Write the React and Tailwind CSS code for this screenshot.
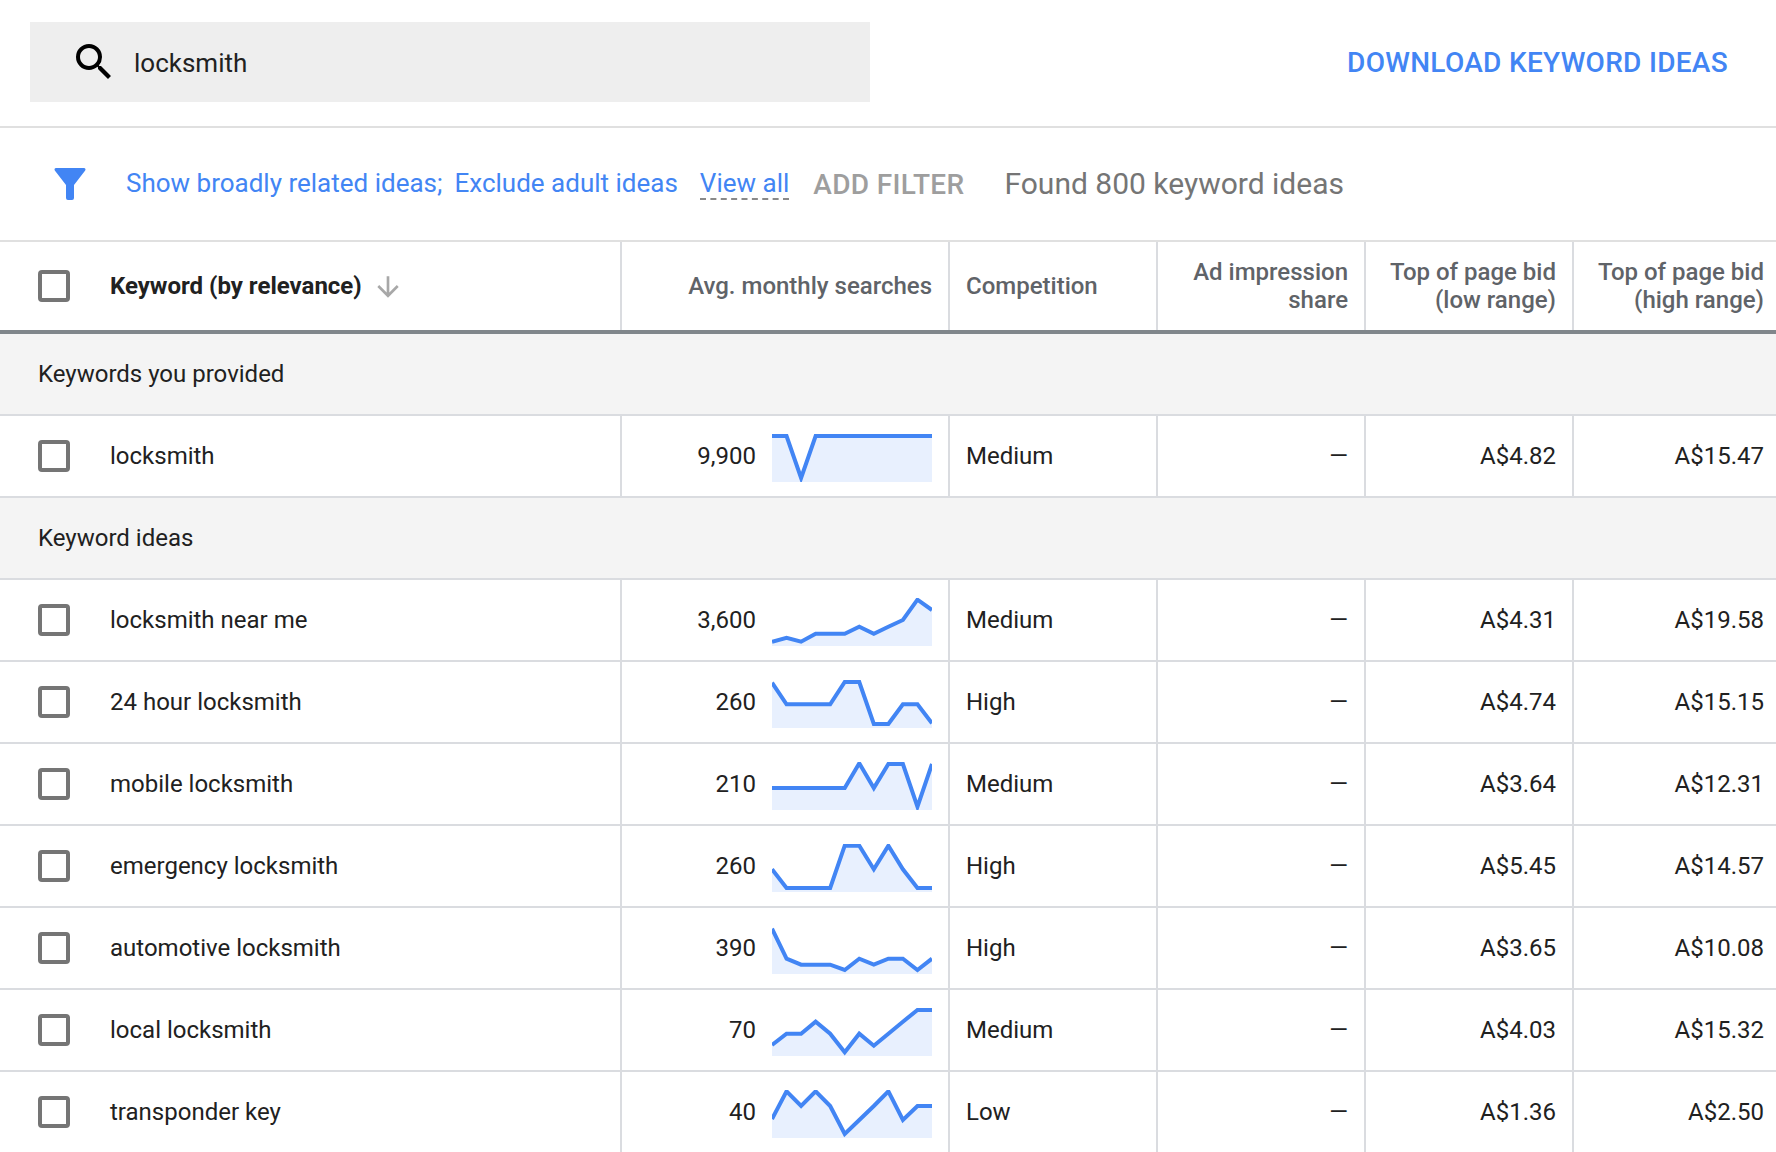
const font = "font-['Roboto',sans-serif]";

const ideas = [
  { kw: "locksmith near me", n: "3,600", comp: "Medium", low: "A$4.31", high: "A$19.58", ys: [43.7, 39.7, 43.7, 35.7, 35.7, 35.7, 28.7, 35.7, 28.7, 22, 1.7, 12] },
  { kw: "24 hour locksmith", n: "260", comp: "High", low: "A$4.74", high: "A$15.15", ys: [2.7, 24.3, 24.3, 24.3, 24.3, 2, 2, 44, 44, 24.3, 24.3, 43.3] },
  { kw: "mobile locksmith", n: "210", comp: "Medium", low: "A$3.64", high: "A$12.31", ys: [26, 26, 26, 26, 26, 26, 1.3, 26, 2, 2, 44.7, 2] },
  { kw: "emergency locksmith", n: "260", comp: "High", low: "A$5.45", high: "A$14.57", ys: [25.3, 44, 44, 44, 44, 1.7, 1.7, 25.3, 1.7, 25.3, 44, 44] },
  { kw: "automotive locksmith", n: "390", comp: "High", low: "A$3.65", high: "A$10.08", ys: [2.7, 32.7, 38.7, 38.7, 38.7, 44, 32.7, 38.7, 32.7, 32.7, 44, 32.7] },
  { kw: "local locksmith", n: "70", comp: "Medium", low: "A$4.03", high: "A$15.32", ys: [37, 25.7, 25.7, 13.7, 25.7, 44.3, 25.7, 37.7, 25.7, 13.7, 2, 2] },
  { kw: "transponder key", n: "40", comp: "Low", low: "A$1.36", high: "A$2.50", ys: [29, 1.3, 16, 1.3, 16, 44, 30, 16, 1.3, 30, 16, 16] },
];

const provided = { kw: "locksmith", n: "9,900", comp: "Medium", low: "A$4.82", high: "A$15.47", ys: [2, 2, 44, 2, 2, 2, 2, 2, 2, 2, 2, 2] };

const cols = "grid grid-cols-[622px_328px_208px_208px_208px_208px] w-[1782px]";
const cell = "border-r-2 border-[#dadce0] flex items-center";

function Checkbox() {
  return <div className="w-8 h-8 border-4 border-[#757575] rounded-[4px] bg-white shrink-0" />;
}

function Spark({ ys }) {
  const pts = ys.map((y, i) => `${(i * 160) / 11},${y}`).join(" ");
  return (
    <svg width="160" height="48" viewBox="0 0 160 48" className="block shrink-0 self-start mt-[18px]">
      <polygon points={`0,48 ${pts} 160,48`} fill="#e8f0fe" />
      <polyline points={pts} fill="none" stroke="#4285f4" strokeWidth="4" />
    </svg>
  );
}

function Row({ r }) {
  return (
    <div className={`${cols} h-[82px] border-b-2 border-[#dadce0] text-[24px] text-[#212121]`}>
      <div className={`${cell} pl-[38px]`}>
        <Checkbox />
        <span className="ml-10">{r.kw}</span>
      </div>
      <div className={`${cell} justify-end pr-4 gap-4`}>
        <span>{r.n}</span>
        <Spark ys={r.ys} />
      </div>
      <div className={`${cell} pl-4`}>{r.comp}</div>
      <div className={`${cell} justify-end pr-4`}>—</div>
      <div className={`${cell} justify-end pr-4`}>{r.low}</div>
      <div className={`${cell} justify-end pr-4`}>{r.high}</div>
    </div>
  );
}

function Section({ title }) {
  return (
    <div className="h-[82px] w-[1782px] border-b-2 border-[#dadce0] bg-[#f4f4f4] flex items-center pl-[38px] text-[24px] text-[#212121]">
      {title}
    </div>
  );
}

export default function App() {
  return (
    <div className={`w-[1776px] h-[1152px] overflow-hidden bg-white ${font}`}>
      <div className="h-[128px] border-b-2 border-[#e0e0e0] flex items-start justify-between">
        <div className="mt-[22px] ml-[30px] w-[840px] h-[80px] bg-[#eeeeee] flex items-center pl-10">
          <svg width="48" height="48" viewBox="0 0 24 24" fill="#000">
            <path d="M15.5 14h-.79l-.28-.27A6.47 6.47 0 0 0 16 9.5 6.5 6.5 0 1 0 9.5 16c1.61 0 3.09-.59 4.23-1.57l.27.28v.79l5 4.99L20.49 19l-4.99-5zm-6 0C7.01 14 5 11.99 5 9.5S7.01 5 9.5 5 14 7.01 14 9.5 11.99 14 9.5 14z" />
          </svg>
          <span className="ml-4 mt-[2px] text-[26px] text-[#212121]">locksmith</span>
        </div>
        <div className="mt-[42px] mr-[48px] text-[28px] font-medium tracking-[0.3px] text-[#4285f4]">DOWNLOAD KEYWORD IDEAS</div>
      </div>

      <div className="h-[114px] border-b-2 border-[#e0e0e0] flex items-center">
        <svg width="32" height="32" viewBox="0 0 32 32" className="ml-[54px]">
          <path d="M2 0 h28 a1.5 1.5 0 0 1 1.2 2.4 L20 17 v13 a2 2 0 0 1 -2 2 h-4 a2 2 0 0 1 -2 -2 v-13 L0.8 2.4 A1.5 1.5 0 0 1 2 0 z" fill="#4285f4" />
        </svg>
        <span className="ml-10 -mt-[1px] text-[26px] text-[#4285f4]">Show broadly related ideas;</span>
        <span className="ml-3 -mt-[1px] text-[26px] text-[#4285f4]">Exclude adult ideas</span>
        <span className="ml-[22px] text-[26px] leading-[30px] text-[#4285f4] border-b-2 border-dashed border-[#8a8a8a]">View all</span>
        <span className="ml-[24px] mt-[2px] text-[28px] font-medium tracking-[0.35px] text-[#9e9e9e]">ADD FILTER</span>
        <span className="ml-10 -mt-[2px] text-[30px] text-[#757575]">Found 800 keyword ideas</span>
      </div>

      <div className={`${cols} h-[92px] border-b-4 border-[#80868b] text-[24px] font-medium text-[#5f6368]`}>
        <div className={`${cell} pl-[38px]`}>
          <Checkbox />
          <span className="ml-10 font-bold text-[#212121]">Keyword (by relevance)</span>
          <svg width="32" height="32" viewBox="0 0 24 24" className="ml-[10px] mt-[2px]" fill="#a8a8a8">
            <path d="M20 12l-1.41-1.41L13 16.17V4h-2v12.17l-5.58-5.59L4 12l8 8 8-8z" />
          </svg>
        </div>
        <div className={`${cell} justify-end pr-4`}>Avg. monthly searches</div>
        <div className={`${cell} pl-4`}>Competition</div>
        <div className={`${cell} justify-end pr-4 text-right leading-[28px]`}>Ad impression<br />share</div>
        <div className={`${cell} justify-end pr-4 text-right leading-[28px]`}>Top of page bid<br />(low range)</div>
        <div className={`${cell} justify-end pr-4 text-right leading-[28px]`}>Top of page bid<br />(high range)</div>
      </div>

      <div>
        <Section title="Keywords you provided" />
        <Row r={provided} />
        <Section title="Keyword ideas" />
        {ideas.map((r) => (
          <Row key={r.kw} r={r} />
        ))}
      </div>
    </div>
  );
}
